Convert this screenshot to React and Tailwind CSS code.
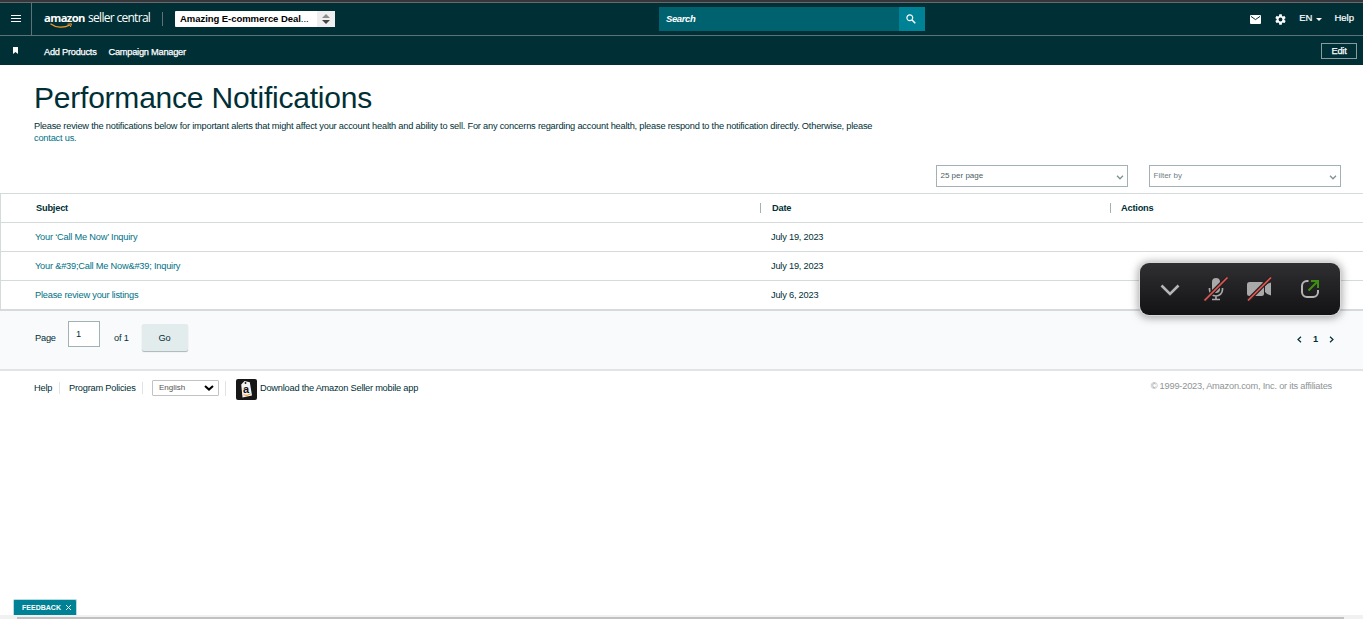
import { useState } from 'react'

const notifications = [
  { id: 1, subject: 'Your ‘Call Me Now’ Inquiry', date: 'July 19, 2023' },
  { id: 2, subject: 'Your &#39;Call Me Now&#39; Inquiry', date: 'July 19, 2023' },
  { id: 3, subject: 'Please review your listings', date: 'July 6, 2023' },
]

function TopBar() {
  return (
    <div className="flex h-[33px] items-center border-b border-[#5d7377] text-white">
      <button className="flex h-full w-8 shrink-0 items-center justify-center border-r border-[#5d7377]">
        <svg width="10" height="8" viewBox="0 0 10 8" stroke="white" strokeWidth="1">
          <path d="M0 .5H10M0 3.5H10M0 6.5H10" />
        </svg>
      </button>

      {/* Logo */}
      <div className="relative ml-3 flex h-[18px] w-[107px] whitespace-nowrap pt-px font-['Open_Sans',sans-serif] text-[12px] leading-[14px]">
        <span className="w-[44px] shrink-0 text-[11.25px] font-bold tracking-[-0.6px]">amazon</span>
        <span className="tracking-[-0.7px]">seller central</span>
        <svg className="absolute left-[6px] top-[13px]" width="23" height="6" viewBox="0 0 23 6" fill="none" stroke="#f39a2b">
          <path d="M.5 .7C6 5 14 5.2 20 2" strokeWidth="1.3" />
          <path d="M17.5 1.2L21.5 .8L20.4 4" strokeWidth="1" />
        </svg>
      </div>
      <div className="ml-[11px] h-[14px] w-px bg-[#5d7377]" />

      {/* Account picker */}
      <div className="ml-3 flex h-4 w-[160px] items-center justify-between rounded-[1px] bg-white text-black">
        <span className="pl-[5px] text-[9.5px] font-bold leading-4 tracking-[-0.05px]">Amazing E-commerce Deal<span className="font-normal">...</span></span>
        <span className="flex h-4 w-[18px] items-center justify-center bg-[#efefef]">
          <svg width="8" height="10" viewBox="0 0 8 10">
            <path d="M4 0L8 4H0Z" fill="#8d8d8d" />
            <path d="M4 10L8 6H0Z" fill="#444" />
          </svg>
        </span>
      </div>

      {/* Search */}
      <div className="ml-[324px] flex h-6 w-[266px]">
        <div className="flex-1 bg-[#00616f] pl-[7px] text-[9.5px] font-bold italic leading-6 tracking-[-0.4px]">Search</div>
        <button className="flex w-[26px] items-center justify-center bg-[#008296] pb-px pr-[2px]">
          <svg width="10" height="10" viewBox="0 0 10 10" fill="none" stroke="white" strokeWidth="1.2">
            <circle cx="3.8" cy="3.8" r="2.9" />
            <path d="M6 6L9.3 9.3" strokeWidth="1.5" />
          </svg>
        </button>
      </div>

      <div className="ml-auto flex items-center pr-[9px] text-[9.5px] [-webkit-text-stroke:0.2px_white]">
        <svg width="11" height="9" viewBox="0 0 11 9">
          <rect width="11" height="9" rx="1" fill="white" />
          <path d="M1 1.4L5.5 4.6L10 1.4" fill="none" stroke="#002f36" />
        </svg>
        <svg className="ml-[13px]" width="13" height="13" viewBox="0 0 24 24" fill="white">
          <path d="M19.14 12.94c.04-.3.06-.61.06-.94s-.02-.64-.07-.94l2.03-1.58a.49.49 0 0 0 .12-.61l-1.92-3.32a.49.49 0 0 0-.59-.22l-2.39.96a7 7 0 0 0-1.62-.94l-.36-2.54a.48.48 0 0 0-.48-.41h-3.84a.48.48 0 0 0-.47.41l-.36 2.54c-.59.24-1.13.57-1.62.94l-2.39-.96a.48.48 0 0 0-.59.22L2.74 8.87a.48.48 0 0 0 .12.61l2.03 1.58a6 6 0 0 0 0 1.88l-2.03 1.58a.49.49 0 0 0-.12.61l1.92 3.32c.12.22.37.29.59.22l2.39-.96c.5.38 1.03.7 1.62.94l.36 2.54c.05.24.24.41.48.41h3.84c.24 0 .44-.17.47-.41l.36-2.54a7 7 0 0 0 1.62-.94l2.39.96c.22.08.47 0 .59-.22l1.92-3.32a.48.48 0 0 0-.12-.61zM12 15.6A3.6 3.6 0 1 1 12 8.4a3.6 3.6 0 0 1 0 7.2" />
        </svg>
        <span className="mb-[2px] ml-[12px] tracking-[0px]">EN</span>
        <svg className="ml-[4px]" width="6" height="3" viewBox="0 0 6 3"><path d="M0 0H6L3 3Z" fill="white" /></svg>
        <span className="mb-[2px] ml-[12px] tracking-[0px]">Help</span>
      </div>
    </div>
  )
}

function FavoritesBar() {
  return (
    <div className="flex h-[29px] items-center text-[9.25px] text-white">
      <svg className="ml-[13px]" width="5" height="7" viewBox="0 0 5 7"><path d="M0 0H5V7L2.5 5L0 7Z" fill="white" /></svg>
      <span className="ml-[26px] mt-[3px] tracking-[-0.25px] [-webkit-text-stroke:0.25px_white]">Add Products</span>
      <span className="ml-3 mt-[3px] tracking-[-0.25px] [-webkit-text-stroke:0.25px_white]">Campaign Manager</span>
      <button className="ml-auto mr-[6px] h-[16px] w-[36px] border border-[#8b9a9c] leading-[14px] [-webkit-text-stroke:0.25px_white]">Edit</button>
    </div>
  )
}

function SelectBox({ label, className }) {
  return (
    <div className={`flex h-[22px] w-[192px] items-center justify-between border border-[#a2b1b3] bg-white pl-[3.5px] pr-[3px] text-[8px] tracking-normal ${className}`}>
      <span>{label}</span>
      <svg className="mt-[2px]" width="8" height="5" viewBox="0 0 8 5" fill="none" stroke="#7f9194" strokeWidth="1.3"><path d="M1 .8L4 3.8L7 .8" /></svg>
    </div>
  )
}

function NotificationTable() {
  return (
    <div className="h-[118px] border-b-2 border-l border-t border-[#d5dbdb]">
      <div className="flex h-[29px] items-center border-b border-[#d5dbdb] font-bold">
        <div className="w-[759px] pl-[35px]">Subject</div>
        <div className="h-[10px] w-px bg-[#a2b1b3]" />
        <div className="w-[349px] pl-[11px]">Date</div>
        <div className="h-[10px] w-px bg-[#a2b1b3]" />
        <div className="pl-[10px]">Actions</div>
      </div>
      {notifications.map(n => (
        <div key={n.id} className="flex h-[29px] items-center border-b border-[#d5dbdb] last:h-[28px] last:border-b-0">
          <a href="#" className="w-[770px] pl-[34px] text-[#007185]">{n.subject}</a>
          <span>{n.date}</span>
        </div>
      ))}
    </div>
  )
}

function Pager() {
  const [page, setPage] = useState('1')

  return (
    <div className="flex h-[60px] items-center border-b-2 border-[#e0e4e6] bg-[#f9fafc] pb-[5px] pl-[35px]">
      <span className="w-[33px]">Page</span>
      <input
        value={page}
        onChange={e => setPage(e.target.value)}
        className="mb-[8px] h-[26px] w-8 border border-[#a2b1b3] bg-white pl-[7px]"
      />
      <span className="ml-[14px] w-[14px] whitespace-nowrap">of 1</span>
      <button className="ml-[13.5px] h-[27px] w-[46px] rounded-[2px] bg-[#e3eced] shadow-[0_1px_1px_#a9b5b7]">Go</button>
      <div className="ml-auto mr-[29px] mt-[3px] flex items-center gap-[8px] text-[#002f36]">
        <svg width="5" height="7" viewBox="0 0 5 7" fill="none" stroke="currentColor" strokeWidth="1.2"><path d="M4 .7L1 3.5L4 6.3" /></svg>
        <span className="pl-[3px] font-bold">1</span>
        <svg className="ml-[3px]" width="5" height="7" viewBox="0 0 5 7" fill="none" stroke="currentColor" strokeWidth="1.2"><path d="M1 .7L4 3.5L1 6.3" /></svg>
      </div>
    </div>
  )
}

function Footer() {
  return (
    <div className="flex h-[34px] items-center pl-[34px]">
      <span className="w-[25px]">Help</span>
      <div className="h-3 w-px bg-[#dfe3e4]" />
      <span className="w-[82px] pl-[9px]">Program Policies</span>
      <div className="h-3 w-px bg-[#dfe3e4]" />
      <div className="ml-[9px] flex h-4 w-[67px] items-center justify-between rounded-[1px] border border-[#c2c2c2] pl-[6px] pr-[4px] text-[8px] tracking-normal text-[#555]">
        English
        <svg width="10" height="6" viewBox="0 0 10 6" fill="none" stroke="black" strokeWidth="2"><path d="M1 1L5 4.6L9 1" /></svg>
      </div>
      <div className="ml-[6px] h-[15px] w-px bg-[#dfe3e4]" />
      {/* App badge */}
      <svg className="ml-[10px] mt-[3px]" width="21" height="21" viewBox="0 0 21 21">
        <rect width="21" height="21" rx="2" fill="#171717" />
        <path d="M5.2 5.5L8.5 2L13.8 3.3L16 16.5L6.5 18.5Z" fill="#f3f3f3" />
        <circle cx="9.5" cy="4" r=".9" fill="#171717" />
        <text x="7" y="13.8" fontSize="11" fontWeight="bold" fill="#111">a</text>
        <path d="M7.5 15.8Q11 17.5 14.5 14.9" fill="none" stroke="#f39a2b" />
      </svg>
      <span className="ml-[3px] tracking-[-0.23px]">Download the Amazon Seller mobile app</span>
      <span className="mb-1 ml-auto mr-[31px] text-[#8f9495]">© 1999-2023, Amazon.com, Inc. or its affiliates</span>
    </div>
  )
}

// Floating call controls
function CallControls() {
  return (
    <div className="absolute left-[1140px] top-[263px] flex h-[52px] w-[200px] items-center rounded-[9px] bg-gradient-to-b from-[#303032] to-[#131315] shadow-[0_0_0_1px_#d8d8d8,0_1px_8px_2px_rgba(0,0,0,0.35)]">
      <svg width="200" height="52" viewBox="0 0 200 52" fill="none">
        <path d="M21.5 22.5L30 31L38.5 22.5" stroke="#b5b5b5" strokeWidth="2.6" />
        <rect x="72" y="15" width="8" height="15" rx="4" fill="#a9a9a9" />
        <path d="M69.5 25V26.5A6.5 6.5 0 0 0 82.5 26.5V25M76 33V36.3M72 36.5H80" stroke="#a9a9a9" strokeWidth="1.7" />
        <path d="M64.5 37.5L87 14.8" stroke="#222" strokeWidth="4" />
        <path d="M64.5 37.5L87.5 14.5" stroke="#e8544f" strokeWidth="1.7" />
        <rect x="107" y="19" width="17" height="14" rx="2.5" fill="#a9a9a9" />
        <path d="M125 23Q127 20 131 19.5V32.5Q127 32 125 29Z" fill="#a9a9a9" />
        <path d="M108 37.5L130.5 14.8" stroke="#222" strokeWidth="4" />
        <path d="M108 37.5L131 14.5" stroke="#e8544f" strokeWidth="1.7" />
        <path d="M168.5 18H167A5 5 0 0 0 162 23V29A5 5 0 0 0 167 34H173A5 5 0 0 0 178 29V27" stroke="#b5b5b5" strokeWidth="2" />
        <path d="M168.5 27.5L177.5 18.5M171 18H178V25" stroke="#3f8f12" strokeWidth="2" />
      </svg>
    </div>
  )
}

export default function App() {
  return (
    <div className="relative flex h-[619px] w-[1363px] flex-col overflow-hidden bg-white font-['Liberation_Sans',Arial,sans-serif] text-[9.25px] leading-3 tracking-[-0.21px] text-[#002f36]">
      <div className="h-[3px] border-b border-[#68696c] bg-[#37373b]" />
      <header className="bg-[#002f36]">
        <TopBar />
        <FavoritesBar />
      </header>

      <main>
        <div className="h-[100px] pl-[34px] pt-[14px]">
          <h1 className="text-[30px] leading-[38px] tracking-[-0.22px]">Performance Notifications</h1>
          <p className="mt-[3px] w-[860px] tracking-[-0.212px]">
            Please review the notifications below for important alerts that might affect your account health and ability to sell. For any concerns regarding account health, please respond to the notification directly. Otherwise, please
            <br />
            <a href="#" className="text-[#007185]">contact us.</a>
          </p>
        </div>
        <div className="flex h-[28px] justify-end gap-[21px] pr-[22px]">
          <SelectBox label="25 per page" className="text-[#4a5f63]" />
          <SelectBox label="Filter by" className="text-[#6f8286]" />
        </div>
        <NotificationTable />
        <Pager />
      </main>
      <Footer />

      <div className="mt-auto flex h-[20px] flex-col">
        <button className="ml-[13px] flex h-4 w-[64px] shrink-0 items-center justify-center gap-[5px] rounded-t-[2px] border border-b-0 border-[#b7dbe0] bg-[#008296] pl-[3px] text-[7px] font-bold tracking-normal text-white">
          FEEDBACK
          <svg width="5" height="5" viewBox="0 0 5 5" stroke="white" strokeWidth=".9"><path d="M0 0L5 5M5 0L0 5" /></svg>
        </button>
        <div className="h-1 bg-[#f1f1f1] pt-[2px]">
          <div className="ml-[17px] h-[2px] w-[1327px] bg-[#c1c1c1]" />
        </div>
      </div>
      <CallControls />
    </div>
  )
}
